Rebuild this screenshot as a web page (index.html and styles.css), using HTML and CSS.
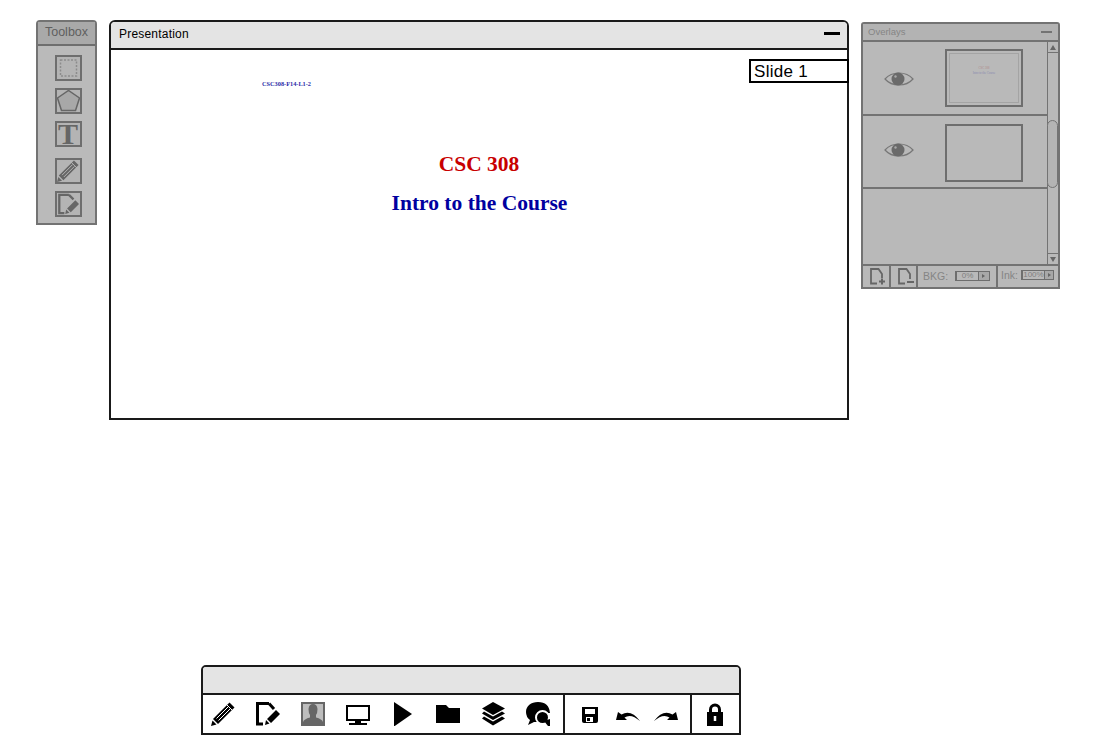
FILE: index.html
```html
<!DOCTYPE html>
<html>
<head>
<meta charset="utf-8">
<title>Presentation</title>
<link rel="stylesheet" href="styles.css">
</head>
<body>
<svg class="defs" width="0" height="0">
  <defs>
    <g id="pencil">
      <path d="M18.500 0.500l5 5L7 22 2 17z"/>
      <path d="M1.500 18.500l4 4L0 24z"/>
    </g>
    <g id="eye">
      <path d="M1 10C8 2 22 2 29 10C22 18 8 18 1 10Z" fill="none" stroke="#777" stroke-width="1.200"/>
      <circle cx="14" cy="10" r="6.500" fill="#6a6a6a"/>
      <circle cx="11.500" cy="7.500" r="1.200" fill="#a8a8a8"/>
    </g>
  </defs>
</svg>

<section class="window toolbox">
  <header class="toolbox-title">Toolbox</header>
  <div class="tools">
    <div class="tool-group">
      <div class="tool"><svg width="23" height="22" viewBox="0 0 23 22"><rect x="3.500" y="3" width="16" height="16" fill="none" stroke="#8c8c8c" stroke-width="1.500" stroke-dasharray="2 1.500"/></svg></div>
      <div class="tool"><svg width="23" height="22" viewBox="0 0 23 22"><path d="M11.500 0.500L22.500 8 18.500 20.500H4.500L0.500 8Z" fill="#a8a8a8" stroke="#666" stroke-width="1.500"/></svg></div>
      <div class="tool"><span class="tool-t">T</span></div>
    </div>
    <div class="tool-group">
      <div class="tool"><svg width="22" height="22" viewBox="0 0 24 24" fill="#666"><use href="#pencil"/><path d="M15.500 2.500L21.500 8.500" stroke="#bbb" stroke-width="1"/><path d="M7.500 18.500L19 7M5.500 16.500L17 5" stroke="#bbb" stroke-width="1"/></svg></div>
      <div class="tool"><svg width="22" height="22" viewBox="0 0 24 24"><path d="M13 2H2.500V22H8M13 2L18 7" fill="none" stroke="#666" stroke-width="2.500"/><path d="M20 8l4 4-9 9-4-4zM10 18l3.500 3.500L9 23z" fill="#666"/></svg></div>
    </div>
  </div>
</section>

<section class="window presentation">
  <header class="title-bar">
    <span class="title-text">Presentation</span>
    <span class="minimize"></span>
  </header>
  <div class="slide">
    <div class="slide-label">Slide 1</div>
    <div class="slide-code">CSC308-F14-L1-2</div>
    <h1 class="slide-title">CSC 308</h1>
    <h2 class="slide-subtitle">Intro to the Course</h2>
  </div>
</section>

<section class="window overlays">
  <header class="overlays-title">
    <span>Overlays</span>
    <span class="overlays-min"></span>
  </header>
  <div class="overlays-main">
    <div class="overlay-list">
      <div class="overlay-row">
        <svg class="eye" width="30" height="20" viewBox="0 0 30 20"><use href="#eye"/></svg>
        <div class="thumb">
          <div class="thumb-inner">
            <div class="thumb-red">CSC 308</div>
            <div class="thumb-blue">Intro to the Course</div>
          </div>
        </div>
      </div>
      <div class="overlay-row second">
        <svg class="eye" width="30" height="20" viewBox="0 0 30 20"><use href="#eye"/></svg>
        <div class="thumb"></div>
      </div>
    </div>
    <div class="scrollbar">
      <div class="arrow-box top"><span class="tri-up"></span></div>
      <div class="scroll-thumb"></div>
      <div class="arrow-box bottom"><span class="tri-down"></span></div>
    </div>
  </div>
  <footer class="overlays-foot">
    <div class="foot-btn first"><svg width="16" height="17" viewBox="0 0 16 17"><path d="M7 15.500H1V1H8.500L12 6V10" fill="none" stroke="#666" stroke-width="1.800"/><path d="M9 13.500h6M12 10.500v6" stroke="#666" stroke-width="2"/></svg></div>
    <div class="foot-btn"><svg width="16" height="17" viewBox="0 0 16 17"><path d="M7 15.500H1V1H8.500L12 6V11" fill="none" stroke="#666" stroke-width="1.800"/><path d="M9 14h7" stroke="#666" stroke-width="2"/></svg></div>
    <div class="foot-field bkg"><span>BKG:</span><div class="stepper wide"><span class="value">0%</span><span class="step"></span></div></div>
    <div class="foot-field ink"><span>Ink:</span><div class="stepper"><span class="value">100%</span><span class="step"></span></div></div>
  </footer>
</section>

<section class="window dock">
  <header class="dock-title"></header>
  <div class="dock-body">
    <div class="dock-group main">
      <svg width="24" height="24" viewBox="0 0 24 24"><use href="#pencil"/><path d="M15.500 2.500L21.500 8.500" stroke="#fff" stroke-width="1"/><path d="M7.500 18.500L19 7M5.500 16.500L17 5" stroke="#fff" stroke-width="1"/></svg>
      <svg width="24" height="24" viewBox="0 0 24 24"><path d="M13 1.500H1.500V22H7M13 1.500L18 7" fill="none" stroke="#000" stroke-width="3"/><path d="M20 8l4 4-9 9-4-4zM10 18l3.500 3.500L9 23z"/></svg>
      <svg width="24" height="24" viewBox="0 0 24 24"><rect width="24" height="24" fill="#666"/><rect x="2" y="2" width="20" height="21" fill="#bdbdbd"/><path d="M2 24V20Q3 17 9 15.500V13Q7.500 11 7.500 7Q8 2 12 2T16.500 7Q16.500 11 15 13V15.500Q21 17 22 20V24Z" fill="#666"/></svg>
      <svg width="24" height="24" viewBox="0 0 24 24"><rect x="1" y="4" width="22" height="14" fill="none" stroke="#000" stroke-width="2"/><rect x="9" y="19" width="6" height="2"/><rect x="3" y="21" width="18" height="2"/></svg>
      <svg width="24" height="24" viewBox="0 0 24 24"><path d="M3 0L21 12 3 24.500Z"/></svg>
      <svg width="24" height="24" viewBox="0 0 24 24"><path d="M0 3H10L13 6H24V21H0Z"/></svg>
      <svg width="24" height="24" viewBox="0 0 24 24"><path d="M12 0L24 6.500 12 13 1 6.500Z"/><path d="M3 9.500L12 14.500 21 9.500 24 11.500 12 18 1 11.500ZM3 14.500L12 19.500 21 14.500 24 16.500 12 23.500 1 16.500Z"/></svg>
      <svg width="24" height="24" viewBox="0 0 24 24"><path d="M12 0C5 0 0 4 0 10Q0 15 4 18L2 23 8 20H11L22 11 24 11Q23 0 12 0Z"/><path d="M16.500 8A7.500 7.500 0 1 0 16.500 23A7.500 7.500 0 1 0 16.500 8Z" fill="#fff"/><circle cx="16.500" cy="15.500" r="5.500"/><path d="M18 19l4 5h2v-7z"/></svg>
    </div>
    <div class="dock-group edit">
      <svg class="save" width="16" height="16" viewBox="0 0 16 16"><path d="M0 0H16V14Q16 16 14 16H2Q0 16 0 14Z"/><rect x="3" y="2" width="10" height="5" fill="#fff"/><rect x="4" y="10" width="7" height="5" fill="#fff"/><rect x="5" y="11" width="3" height="3"/></svg>
      <svg width="26" height="16" viewBox="0 0 26 16"><path d="M2 12L4 4 7.500 6.500Q17 1 26 13Q17 5 10.500 9.500L13 12Z"/></svg>
      <svg width="24" height="16" viewBox="0 0 24 16"><path d="M24 12L22 4 18.500 6.500Q9 1 0 13Q9 5 15.500 9.500L13 12Z"/></svg>
    </div>
    <div class="dock-group lock">
      <svg width="16" height="23" viewBox="0 0 16 23"><path d="M3.500 10V6.500A4.500 4.500 0 0 1 12.500 6.500V10" fill="none" stroke="#000" stroke-width="3"/><rect y="9" width="16" height="14"/><path d="M8 13v5" stroke="#fff" stroke-width="2.500"/></svg>
    </div>
  </div>
</section>
</body>
</html>
```

FILE: styles.css
```css
* { box-sizing: border-box; }

html, body {
  margin: 0;
  padding: 0;
  width: 1100px;
  height: 750px;
  background: #fff;
  overflow: hidden;
  font-family: "Liberation Sans", Arial, sans-serif;
}

.defs { position: absolute; }

.window { position: absolute; }

/* Toolbox */
.toolbox {
  left: 36px;
  top: 20px;
  width: 61px;
  height: 205px;
  background: #bababa;
  border: 2px solid #737373;
  border-radius: 4px 4px 0 0;
}
.toolbox-title {
  height: 24px;
  background: #a9a9a9;
  border-bottom: 2px solid #6e6e6e;
  color: #5f5f5f;
  font-size: 12.500px;
  line-height: 21px;
  text-align: center;
}
.tools {
  display: flex;
  flex-direction: column;
  align-items: center;
  gap: 11px;
  padding: 9px 0 0 3px;
}
.tool-group {
  display: flex;
  flex-direction: column;
  gap: 7px;
}
.tool {
  width: 27px;
  height: 26px;
  border: 2px solid #6e6e6e;
  display: flex;
  align-items: center;
  justify-content: center;
  background: #b4b4b4;
}
.tool-t {
  font-family: "Liberation Serif", serif;
  font-weight: bold;
  font-size: 30px;
  line-height: 22px;
  color: #666;
}

/* Presentation */
.presentation {
  left: 109px;
  top: 20px;
  width: 740px;
  height: 400px;
  background: #fff;
  border: 2px solid #1a1a1a;
  border-radius: 6px 6px 0 0;
}
.title-bar {
  height: 28px;
  background: #e4e4e4;
  border-bottom: 2px solid #1a1a1a;
  display: flex;
  align-items: center;
  justify-content: space-between;
  padding: 0 7px 3px 8px;
  border-radius: 4px 4px 0 0;
}
.title-text {
  font-size: 12px;
  letter-spacing: 0.200px;
  color: #000;
}
.minimize {
  width: 16px;
  height: 3px;
  background: #000;
}
.slide {
  position: relative;
  height: 368px;
  font-family: "Liberation Serif", serif;
  text-align: center;
}
.slide-label {
  position: absolute;
  top: 9px;
  right: -2px;
  width: 100px;
  height: 24px;
  border: 2px solid #000;
  background: #fff;
  font-family: "Liberation Sans", Arial, sans-serif;
  font-size: 17px;
  letter-spacing: 0.300px;
  line-height: 21px;
  text-align: left;
  padding-left: 3px;
  z-index: 1;
}
.slide-code {
  position: absolute;
  left: 151px;
  top: 30px;
  font-size: 6.300px;
  line-height: 8px;
  font-weight: bold;
  color: #2a2aa8;
}
.slide-title {
  margin: 0;
  padding-top: 101px;
  font-size: 21.500px;
  line-height: 26px;
  font-weight: bold;
  color: #c80000;
}
.slide-subtitle {
  margin: 0;
  padding: 13px 0 0 1px;
  font-size: 21.500px;
  line-height: 26px;
  font-weight: bold;
  color: #0000a0;
}

/* Overlays */
.overlays {
  left: 861px;
  top: 22px;
  width: 199px;
  height: 267px;
  background: #b9b9b9;
  border: 2px solid #737373;
  border-radius: 3px 3px 0 0;
  display: flex;
  flex-direction: column;
}
.overlays-title {
  height: 18px;
  flex: none;
  background: #b3b3b3;
  border-bottom: 2px solid #737373;
  display: flex;
  align-items: center;
  justify-content: space-between;
  padding: 0 6px 1px 5px;
  color: #858585;
  font-size: 9.500px;
}
.overlays-min {
  width: 11px;
  height: 2px;
  background: #737373;
}
.overlays-main {
  height: 222px;
  flex: none;
  display: flex;
}
.overlay-list { flex: 1; }
.overlay-row {
  height: 74px;
  border-bottom: 2px solid #737373;
  display: flex;
  align-items: center;
  padding-left: 21px;
  gap: 31px;
}
.overlay-row .eye { margin-top: 2px; }
.overlay-row.second {
  height: 73px;
}
.overlay-row.second .eye { margin: 0 0 4px; }
.overlay-row.second .thumb { margin-top: 2px; }
.eye { flex: none; }
.thumb {
  width: 78px;
  height: 58px;
  border: 2px solid #6e6e6e;
  padding: 2px;
}
.thumb-inner {
  height: 100%;
  border: 1px solid #a4a4a4;
  text-align: center;
  font-family: "Liberation Serif", serif;
  font-size: 3px;
  line-height: 5px;
  padding-top: 12px;
}
.thumb-red { color: #b08a8a; }
.thumb-blue { color: #8a8ab0; }
.scrollbar {
  width: 11px;
  flex: none;
  border-left: 1px solid #737373;
  position: relative;
}
.arrow-box {
  height: 11px;
  display: flex;
  align-items: center;
  justify-content: center;
  background: #b9b9b9;
}
.arrow-box.top { border-bottom: 1px solid #737373; }
.arrow-box.bottom {
  position: absolute;
  left: 0;
  right: 0;
  bottom: 0;
  border-top: 1px solid #737373;
}
.tri-up, .tri-down {
  width: 0;
  height: 0;
  border-left: 3px solid transparent;
  border-right: 3px solid transparent;
}
.tri-up { border-bottom: 5px solid #666; }
.tri-down { border-top: 5px solid #666; }
.scroll-thumb {
  position: absolute;
  left: -1px;
  top: 78px;
  width: 11px;
  height: 68px;
  border: 1px solid #737373;
  border-radius: 6px;
  background: #b4b4b4;
}
.overlays-foot {
  flex: 1;
  min-height: 0;
  border-top: 2px solid #737373;
  display: flex;
  align-items: stretch;
  color: #858585;
  font-size: 10.500px;
}
.foot-btn {
  width: 27px;
  border-right: 2px solid #737373;
  display: flex;
  align-items: center;
  padding-left: 7px;
}
.foot-btn.first { width: 28px; padding-left: 7px; }
.foot-field {
  display: flex;
  align-items: center;
  gap: 7px;
  padding-left: 5px;
  padding-bottom: 2px;
}
.foot-field.bkg {
  width: 80px;
  border-right: 2px solid #737373;
}
.foot-field.ink {
  gap: 3px;
  padding-left: 3px;
  padding-bottom: 3px;
}
.stepper {
  display: flex;
  width: 33px;
  height: 10px;
  border: 1px solid #6e6e6e;
  border-left-width: 2px;
  font-size: 8px;
  line-height: 8px;
  color: #808080;
}
.stepper.wide {
  width: 35px;
}
.value {
  flex: 1;
  text-align: center;
}
.step {
  width: 9px;
  background: #a8a8a8;
  border-left: 1px solid #6e6e6e;
  position: relative;
}
.wide .step { width: 11px; }
.step::after {
  content: "";
  position: absolute;
  left: 3px;
  top: 2px;
  border-left: 3px solid #666;
  border-top: 2px solid transparent;
  border-bottom: 2px solid transparent;
}

/* Bottom dock */
.dock {
  left: 201px;
  top: 665px;
  width: 540px;
  height: 70px;
  background: #fff;
  border: 2px solid #1a1a1a;
  border-radius: 5px 5px 0 0;
  display: flex;
  flex-direction: column;
}
.dock-title {
  height: 28px;
  flex: none;
  background: #e4e4e4;
  border-bottom: 2px solid #1a1a1a;
  border-radius: 3px 3px 0 0;
}
.dock-body {
  flex: 1;
  display: flex;
  align-items: stretch;
}
.dock-group {
  display: flex;
  align-items: center;
}
.dock-group.main {
  width: 360px;
  padding-left: 8px;
  gap: 21px;
}
.dock-group.edit {
  width: 127px;
  border-left: 2px solid #1a1a1a;
  padding-left: 17px;
  gap: 14px;
}
.save { margin: 2px 2px 0 0; }
.dock-group.edit svg:not(.save) { margin-top: 3px; }
.dock-group.lock {
  flex: 1;
  border-left: 2px solid #1a1a1a;
  padding-left: 15px;
}
```
